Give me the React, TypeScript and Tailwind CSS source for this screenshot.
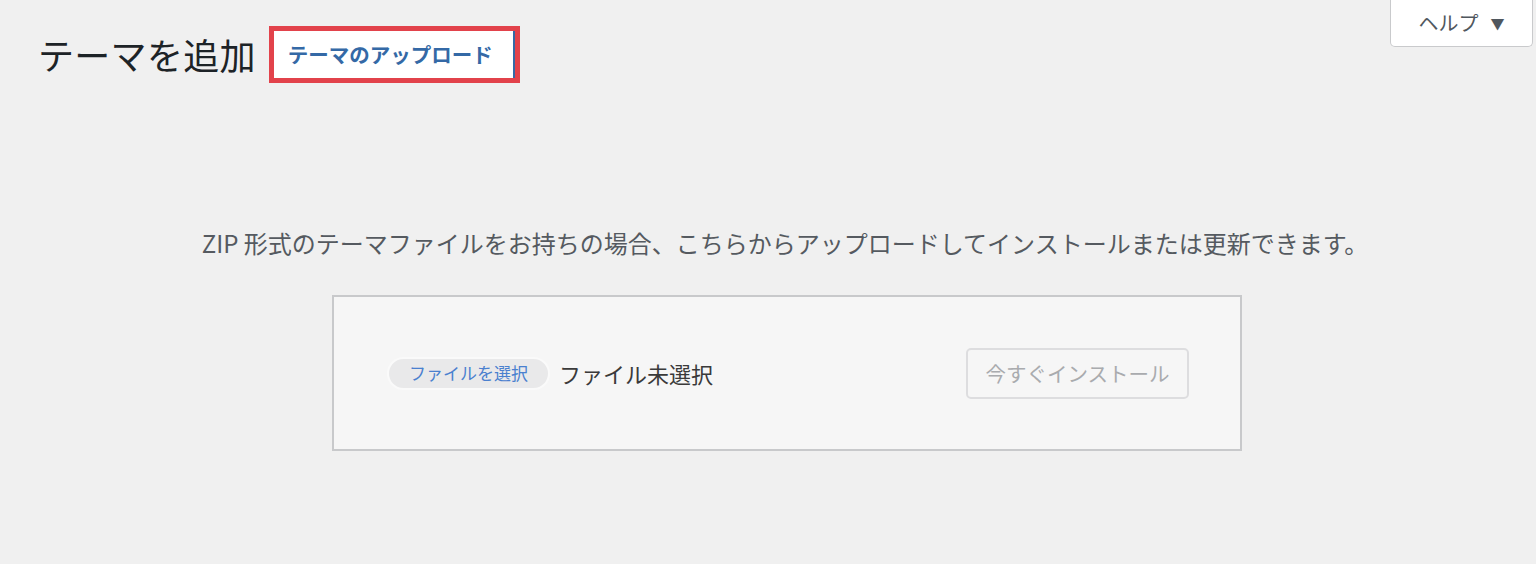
export default function App() {
  const font = { fontFamily: '"Noto Sans CJK JP", "Noto Sans", sans-serif' };

  return (
    <div className="relative h-[564px] w-full overflow-hidden bg-[#f0f0f0] text-[#1d2327]" style={font}>
      {/* Help tab */}
      <button className="absolute right-[3px] top-0 flex h-[47px] w-[143px] items-center justify-center gap-[12px] rounded-b-[5px] border border-t-0 border-[#c9cacc] bg-white text-[20px] text-[#50575e]">
        <span>ヘルプ</span>
        <span className="text-[14px]">▼</span>
      </button>

      {/* Title row */}
      <div className="flex items-center gap-[13px] pl-[38px] pt-[26px]">
        <h1 className="text-[36px] font-normal leading-[57px] tracking-[0.3px]">テーマを追加</h1>
        <div className="h-[57px] border-[5px] border-[#e2424b] bg-white">
          <div className="flex h-full w-[241px] items-center border-r-[2px] border-[#3469a6] pl-[14px] text-[20.5px] font-bold text-[#3469a6]">
            テーマのアップロード
          </div>
        </div>
      </div>

      {/* Upload area */}
      <div className="flex flex-col items-center pl-[34px] pt-[144px]">
        <p className="text-[24px] leading-[32px] text-[#555a60]">
          ZIP 形式のテーマファイルをお持ちの場合、こちらからアップロードしてインストールまたは更新できます。
        </p>
        <div className="ml-[4px] mt-[36px] flex h-[156px] w-[910px] items-center justify-between border-2 border-[#c8c9cb] bg-[#f6f6f6] pl-[53px] pr-[51px]">
          <div className="flex items-center gap-[9px]">
            <span className="flex h-[33px] w-[163px] items-center justify-center rounded-full border-2 border-[#fafafa] bg-[#e9e9ea] text-[17px] text-[#4a80cf]">
              ファイルを選択
            </span>
            <span className="text-[22px] text-[#3a3a3a]">ファイル未選択</span>
          </div>
          <button className="flex h-[51px] w-[223px] items-center justify-center rounded-[5px] border-2 border-[#dddddf] text-[20.5px] text-[#a9abae]">
            今すぐインストール
          </button>
        </div>
      </div>
    </div>
  );
}
